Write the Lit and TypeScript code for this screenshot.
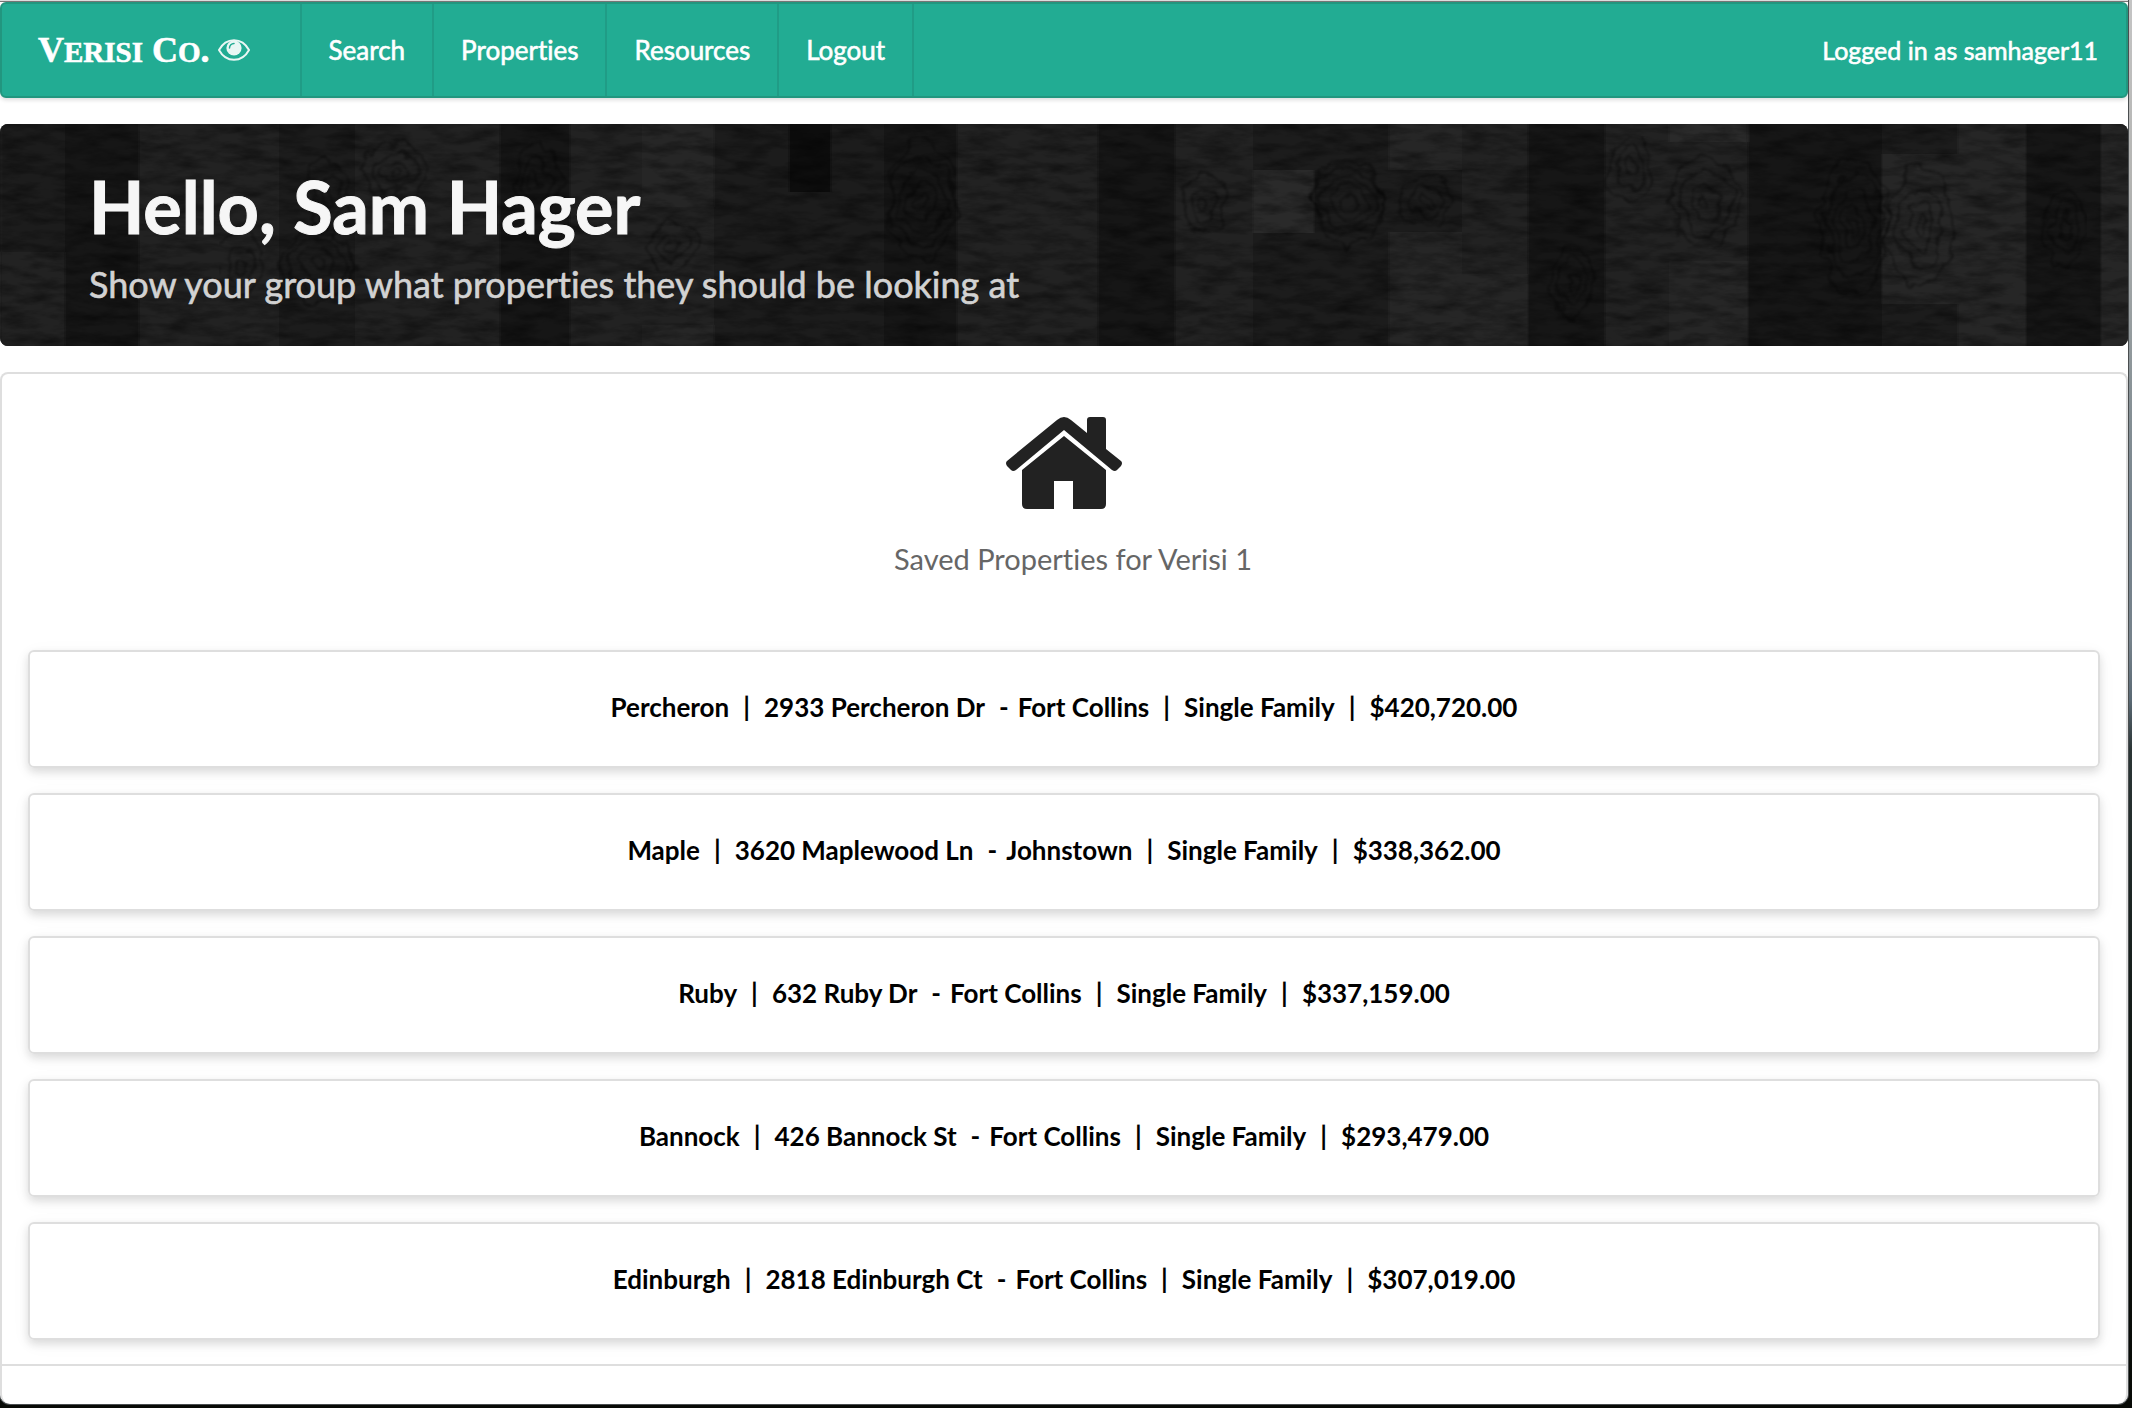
import { LitElement, html, svg, css } from "lit";
import { customElement } from "lit/decorators.js";

interface Property {
  name: string;
  address: string;
  city: string;
  kind: string;
  price: string;
}

const PROPERTIES: Property[] = [
  { name: "Percheron", address: "2933 Percheron Dr", city: "Fort Collins", kind: "Single Family", price: "$420,720.00" },
  { name: "Maple", address: "3620 Maplewood Ln", city: "Johnstown", kind: "Single Family", price: "$338,362.00" },
  { name: "Ruby", address: "632 Ruby Dr", city: "Fort Collins", kind: "Single Family", price: "$337,159.00" },
  { name: "Bannock", address: "426 Bannock St", city: "Fort Collins", kind: "Single Family", price: "$293,479.00" },
  { name: "Edinburgh", address: "2818 Edinburgh Ct", city: "Fort Collins", kind: "Single Family", price: "$307,019.00" },
];

const NAV = ["Search", "Properties", "Resources", "Logout"];

// Wood planks: x, y, width, height, grey level.
const PLANKS: number[][] = [
  [0, 0, 65, 128, 29], [0, 128, 65, 94, 35], [65, 0, 74, 222, 20], [139, 0, 72, 222, 34],
  [211, 0, 68, 222, 33], [279, 0, 76, 222, 28], [355, 0, 71, 222, 36], [426, 0, 74, 222, 34],
  [500, 0, 70, 222, 25], [570, 0, 72, 222, 35], [642, 0, 72, 83, 38], [642, 83, 72, 118, 32],
  [642, 201, 72, 21, 38], [714, 0, 75, 222, 26], [789, 0, 42, 68, 17], [789, 68, 42, 154, 31],
  [831, 0, 53, 222, 27], [884, 0, 73, 222, 25], [957, 0, 76, 222, 34], [1033, 0, 65, 222, 36],
  [1098, 0, 77, 222, 20], [1175, 0, 78, 222, 36], [1253, 0, 61, 46, 30], [1253, 46, 61, 63, 41],
  [1253, 109, 61, 113, 30], [1314, 0, 75, 222, 31], [1389, 0, 73, 46, 39], [1389, 46, 73, 62, 28],
  [1389, 108, 73, 114, 38], [1462, 0, 66, 150, 35], [1462, 150, 66, 72, 38], [1528, 0, 77, 222, 25],
  [1605, 0, 64, 222, 36], [1669, 0, 79, 18, 43], [1669, 18, 79, 119, 34], [1669, 137, 79, 85, 39],
  [1748, 0, 66, 222, 25], [1814, 0, 68, 222, 24], [1882, 0, 76, 30, 29], [1882, 30, 76, 150, 38],
  [1882, 180, 76, 42, 27], [1958, 0, 68, 222, 37], [2026, 0, 75, 222, 20], [2101, 0, 40, 222, 38],
];

// Knots in the wood: centre x, centre y, horizontal step, vertical step, ring count.
const KNOTS: number[][] = [
  [921, 77, 9, 13, 5], [1852, 103, 8, 14, 5], [1346, 78, 11, 10, 5], [316, 140, 11, 10, 4],
  [325, 76, 8, 15, 3], [1703, 78, 10, 12, 4], [1202, 80, 9, 12, 3], [1424, 77, 10, 9, 3],
  [393, 48, 9, 8, 4], [534, 55, 8, 14, 3], [1918, 103, 9, 16, 4], [1572, 160, 8, 15, 3],
  [670, 122, 10, 9, 3], [238, 140, 8, 13, 3], [2064, 103, 8, 15, 3], [1628, 44, 8, 12, 3],
];

@customElement("app-root")
export class AppRoot extends LitElement {
  static styles = css`
    :host {
      display: block;
      font-family: Lato, "Liberation Sans", sans-serif;
      font-size: 26px;
      font-variant-ligatures: none;
      color: #000;
    }
    * { box-sizing: border-box; }
    .desktop {
      min-height: 100vh;
      padding: 0 4px 4px 0;
      background: linear-gradient(#c4c4c4 0, #b4b4b2 180px, #8b9498 380px, #74818b 520px, #76828b 640px, #5a6974 700px, #2b3535 750px, #1c2523 900px, #0e1410 1100px, #080a06 100%);
    }
    .window {
      display: flex;
      flex-direction: column;
      gap: 26px;
      min-height: calc(100vh - 4px);
      padding-top: 1px;
      border-top: 1px solid #dcdcdc;
      border-radius: 0 0 10px 10px;
      background: #fff;
      box-shadow: 0 0 0 1px #4a4e50, inset 0 1px 0 #777;
      overflow: hidden;
    }
    .nav {
      display: flex;
      height: 96px;
      border: 2px solid #22967f;
      border-radius: 6px;
      background: #22ac93;
      box-shadow: 0 2px 4px rgba(0, 0, 0, 0.14);
      color: #fff;
      -webkit-text-stroke: 0.6px;
    }
    .nav a {
      display: flex;
      align-items: center;
      padding: 0 27px;
      border-right: 2px solid #209c86;
      color: inherit;
      text-decoration: none;
    }
    .nav .brand {
      gap: 8px;
      padding: 0 50px 0 36px;
      font-family: "Liberation Serif", serif;
      font-size: 36px;
      font-weight: 700;
    }
    .small { font-size: 29px; text-transform: uppercase; }
    .eye { width: 32px; height: 22px; }
    .user { margin: auto 28px auto auto; font-size: 25px; }
    .hero {
      position: relative;
      padding: 47px 89px 37px;
      border-radius: 8px;
      background: #1e1e1e;
      overflow: hidden;
    }
    .wood {
      position: absolute;
      inset: 0;
      width: 100%;
      height: 100%;
    }
    .hero h1 {
      position: relative;
      margin: 0;
      font-size: 72px;
      line-height: 70px;
      color: #f6f6f6;
      -webkit-text-stroke: 1px;
    }
    .hero p {
      position: relative;
      margin: 18px 0 0;
      font-size: 36px;
      line-height: 50px;
      color: #d2d2d2;
      -webkit-text-stroke: 0.6px;
    }
    .panel {
      flex: 1;
      border: 2px solid #dedede;
      border-bottom: 0;
      border-radius: 8px 8px 10px 10px;
    }
    .saved {
      display: flex;
      flex-direction: column;
      align-items: center;
      padding: 42px 0 66px;
    }
    .house { width: 118px; height: 96px; }
    .saved h2 {
      margin: 22px 0 0;
      padding-left: 18px;
      font-size: 29px;
      line-height: 50px;
      font-weight: 400;
      color: #666;
    }
    .list {
      display: flex;
      flex-direction: column;
      gap: 25px;
      margin: 0;
      padding: 0 26px 24px;
      border-bottom: 2px solid #dedede;
      list-style: none;
    }
    .card {
      display: flex;
      align-items: center;
      justify-content: center;
      height: 118px;
      padding-bottom: 4px;
      border: 2px solid #dedede;
      border-radius: 6px;
      box-shadow: 0 4px 8px rgba(0, 0, 0, 0.12), 0 4px 20px rgba(0, 0, 0, 0.04);
      font-weight: 700;
    }
    .bar { margin: 0 14px; }
    .dash { margin: 0 9px 0 14px; }
  `;

  private wood() {
    return html`<svg class="wood" viewBox="0 0 2128 222" preserveAspectRatio="xMidYMid slice" aria-hidden="true">
      <defs>
        <filter id="grain" x="0" y="0" width="100%" height="100%">
          <feTurbulence type="fractalNoise" baseFrequency="0.03 0.1" numOctaves="4" seed="7" />
          <feColorMatrix values="0 0 0 0 0  0 0 0 0 0  0 0 0 0 0  1.6 0 0 0 -0.6" />
        </filter>
        <filter id="warp" x="0" y="0" width="100%" height="100%">
          <feTurbulence type="fractalNoise" baseFrequency="0.04" numOctaves="3" seed="3" />
          <feDisplacementMap in="SourceGraphic" scale="22" xChannelSelector="R" yChannelSelector="G" />
          <feGaussianBlur stdDeviation="1" />
        </filter>
        <filter id="soft"><feGaussianBlur stdDeviation="1.5 0.4" /></filter>
      </defs>
      <g filter="url(#soft)">
        ${PLANKS.map(([x, y, w, h, v]) => svg`<rect x=${x} y=${y} width=${w} height=${h} fill=${`rgb(${v},${v},${v})`} />`)}
      </g>
      <g filter="url(#warp)" fill="none" stroke="#080808" stroke-opacity="0.38" stroke-width="2">
        ${KNOTS.map(([x, y, dx, dy, n]) =>
          Array.from({ length: n }, (_, i) =>
            svg`<ellipse cx=${x + 2} cy=${y} rx=${Math.min(34, dx * (i + 0.6))} ry=${dy * (i + 0.6)} />`))}
      </g>
      <rect width="2128" height="222" filter="url(#grain)" opacity="0.55" />
    </svg>`;
  }

  render() {
    return html`<div class="desktop"><div class="window">
      <nav class="nav">
        <a class="brand" href="#"><span>V<span class="small">erisi</span> C<span class="small">o</span>.</span>
          <svg class="eye" viewBox="0 0 32 22" aria-hidden="true">
            <path d="M1 11C8 -2 24 -2 31 11C24 24 8 24 1 11Z" fill="none" stroke="#e9f7f4" stroke-width="2" />
            <circle cx="16" cy="9" r="7.6" fill="#e9f7f4" />
            <path d="M11.5 9a4.5 4.5 0 0 1 4.5-4.5" fill="none" stroke="#22ac93" stroke-width="1.5" stroke-linecap="round" />
          </svg>
        </a>
        ${NAV.map((label) => html`<a href="#">${label}</a>`)}
        <span class="user">Logged in as samhager11</span>
      </nav>
      <header class="hero">
        ${this.wood()}
        <h1>Hello, Sam Hager</h1>
        <p>Show your group what properties they should be looking at</p>
      </header>
      <main class="panel">
        <div class="saved">
          <svg class="house" viewBox="0 0 118 96" fill="#222" aria-hidden="true">
            <path d="M2 45L52 4Q59 -2 66 4L82 17V4Q82 1 85 1H98Q101 1 101 4V33L116 45Q118 47 116 50L112 54Q110 56 107 54L59 14L11 54Q8 56 6 54L2 50Q0 47 2 45Z" />
            <path d="M59 20L101 54V88Q101 93 96 93H68V65H49V93H22Q17 93 17 88V54Z" />
          </svg>
          <h2>Saved Properties for Verisi 1</h2>
        </div>
        <ul class="list">
          ${PROPERTIES.map((p) => html`<li class="card">
            <span>${p.name}</span><span class="bar">|</span>
            <span>${p.address}</span><span class="dash">-</span>
            <span>${p.city}</span><span class="bar">|</span>
            <span>${p.kind}</span><span class="bar">|</span>
            <span>${p.price}</span>
          </li>`)}
        </ul>
      </main>
    </div></div>`;
  }
}
